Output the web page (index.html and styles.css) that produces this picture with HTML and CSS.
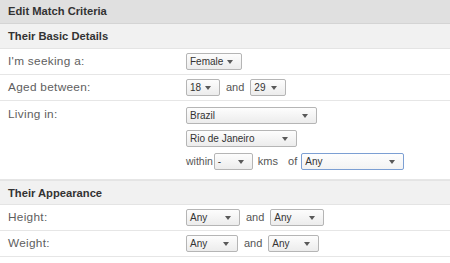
FILE: index.html
```html
<!DOCTYPE html>
<html lang="en">
<head>
  <meta charset="UTF-8" />
  <title>Edit Match Criteria</title>
  <link rel="stylesheet" href="styles.css">
</head>
<body>
  <div class="panel">
    <div class="panel-title">Edit Match Criteria</div>

    <div class="section-head">Their Basic Details</div>
    <div class="row">
      <div class="label">I'm seeking a:</div>
      <div class="field">
        <span class="sel w-female">Female</span>
      </div>
    </div>
    <div class="row">
      <div class="label">Aged between:</div>
      <div class="field">
        <span class="sel w-age">18</span>
        <span class="txt">and</span>
        <span class="sel w-age2">29</span>
      </div>
    </div>
    <div class="row row-living">
      <div class="label">Living in:</div>
      <div class="field stack">
        <span class="sel w-country">Brazil</span>
        <span class="sel w-city">Rio de Janeiro</span>
        <div class="line">
          <span class="txt t-within">within</span>
          <span class="sel w-dist">-</span>
          <span class="txt t-kms">kms</span>
          <span class="txt t-of">of</span>
          <span class="sel w-of focus">Any</span>
        </div>
      </div>
    </div>

    <div class="section-head">Their Appearance</div>
    <div class="row">
      <div class="label">Height:</div>
      <div class="field">
        <span class="sel w-h1">Any</span>
        <span class="txt">and</span>
        <span class="sel w-h2">Any</span>
      </div>
    </div>
    <div class="row">
      <div class="label">Weight:</div>
      <div class="field">
        <span class="sel w-w1">Any</span>
        <span class="txt">and</span>
        <span class="sel w-w2">Any</span>
      </div>
    </div>
  </div>
</body>
</html>
```

FILE: styles.css
```css
* {
  margin: 0;
  padding: 0;
  box-sizing: border-box;
}
html, body {
  background: #fff;
  font-family: "Liberation Sans", Arial, sans-serif;
  font-size: 11px;
  color: #5a5a5a;
  overflow: hidden;
}
.panel {
  width: 450px;
}
.panel-title {
  height: 24px;
  line-height: 23px;
  padding-left: 8px;
  background: #e0e0e0;
  border-bottom: 1px solid #d4d4d4;
  font-weight: bold;
  font-size: 11.2px;
  color: #333;
}
.section-head {
  height: 25px;
  line-height: 24px;
  padding-left: 8px;
  background: #f1f1f1;
  border-bottom: 1px solid #e4e4e4;
  border-top: 1px solid #e4e4e4;
  font-weight: bold;
  font-size: 11.2px;
  color: #333;
}
.panel-title + .section-head {
  border-top: none;
}
.row {
  display: flex;
  align-items: flex-start;
  border-bottom: 1px solid #e6e6e6;
  padding: 4px 0;
  min-height: 26px;
}
.label {
  width: 186px;
  padding-left: 8px;
  line-height: 17px;
  font-size: 11.8px;
  letter-spacing: 0.3px;
  color: #5e5e5e;
}
.field {
  display: flex;
  align-items: center;
  gap: 6px;
}
.stack {
  flex-direction: column;
  align-items: flex-start;
  gap: 6px;
}
.line {
  display: flex;
  align-items: center;
}
.row-living {
  padding: 6px 0 9px;
}
.row-living .label {
  line-height: 15px;
}
.txt {
  color: #555;
  line-height: 17px;
  font-size: 11px;
}
.t-within {
  margin-right: 1px;
  font-size: 10.5px;
}
.t-kms {
  margin: 0 10px 0 5px;
}
.t-of {
  margin-right: 4px;
}
.sel {
  position: relative;
  display: inline-block;
  height: 17px;
  line-height: 15px;
  padding-left: 3px;
  border: 1px solid #b5b5b5;
  border-radius: 2px;
  background: linear-gradient(#fdfdfd, #ececec);
  color: #333;
  font-size: 10px;
}
.sel::after {
  content: "";
  position: absolute;
  right: 8px;
  top: 6px;
  border-left: 3.5px solid transparent;
  border-right: 3.5px solid transparent;
  border-top: 4px solid #595959;
}
.sel.focus {
  border-color: #7c9fd3;
  background: linear-gradient(#fefefe, #f3f3f3);
}
.w-female { width: 56px; }
.w-age { width: 34px; }
.w-age2 { width: 36px; }
.w-country { width: 131px; }
.w-city { width: 111px; }
.w-dist { width: 39px; }
.w-of { width: 103px; }
.w-h1 { width: 54px; }
.w-h2 { width: 54px; }
.w-w1 { width: 52px; }
.w-w2 { width: 51px; }
```
